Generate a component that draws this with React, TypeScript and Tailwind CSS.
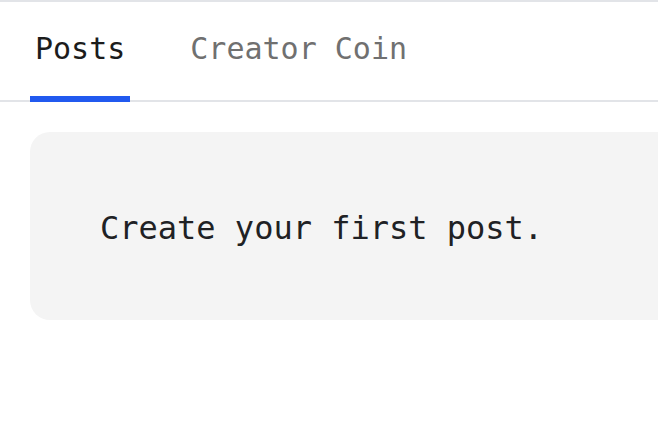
const tabs = ["Posts", "Creator Coin"]

const App = () => {
  const active = 0
  return (
    <div className="w-[658px] h-[428px] overflow-hidden bg-white font-['DejaVu_Sans_Mono',monospace]">
      <div className="border-t-2 border-b-2 border-[#e2e4e8] flex flex-row pl-[30px] gap-[55px] h-[102px]">
        {tabs.map((tab, index) => (
          <div key={tab} className="relative flex items-center px-[5px] h-full">
            <span
              className={
                index === active
                  ? "text-[30px] leading-none text-[#1c1c1c] -mt-[4px]"
                  : "text-[30px] leading-none text-[#707070] -mt-[4px]"
              }
            >
              {tab}
            </span>
            {index === active && (
              <div className="absolute left-0 right-0 -bottom-[2px] h-[6px] bg-[#2159ef]"></div>
            )}
          </div>
        ))}
      </div>
      <div className="pl-[30px] pt-[30px]">
        <div className="w-[700px] h-[188px] rounded-[20px] bg-[#f4f4f4] flex items-center pl-[70px]">
          <span className="text-[32px] leading-none text-[#202124] mt-[4px]">Create your first post.</span>
        </div>
      </div>
    </div>
  )
}

export default App
